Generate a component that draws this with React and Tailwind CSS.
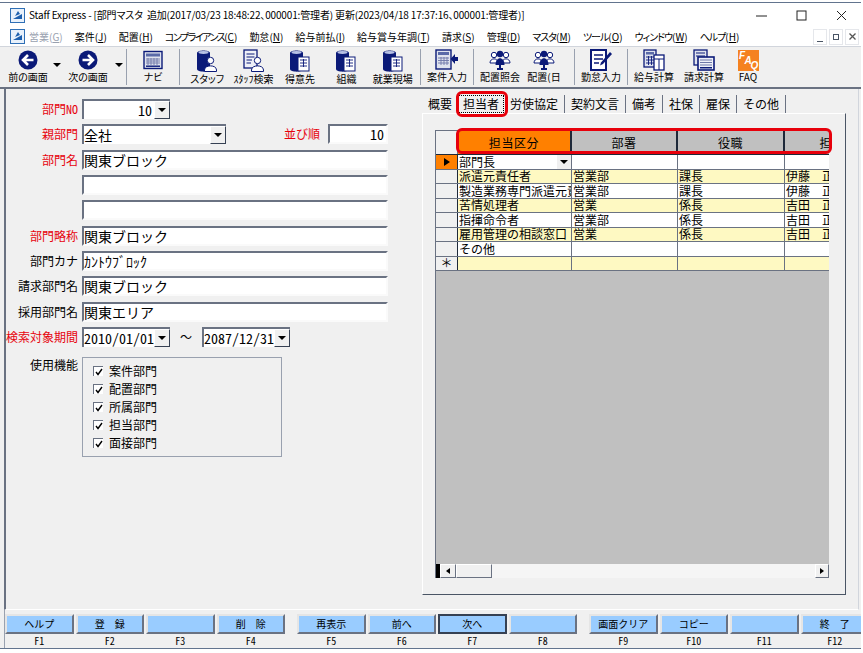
import React from 'react';

const font = { fontFamily: '"Noto Sans CJK JP", "Liberation Sans", sans-serif' };
const sunken = 'border-2 border-t-gray-500 border-l-gray-500 border-r-neutral-50 border-b-neutral-50 bg-white';
const raised = 'border border-t-white border-l-white border-r-gray-500 border-b-gray-500 bg-[#f0f0f0]';
const palt = '[font-feature-settings:"palt"]';
const hwid = '[font-feature-settings:"hwid"]';
const navy = '#0b1a78';

const menus = [
  ['営業', 'G'], ['案件', 'J'], ['配置', 'H'], ['コンプライアンス', 'C', 'tracking-[-1.5px]'], ['勤怠', 'N'], ['給与前払', 'I'], ['給与賞与年調', 'T'],
  ['請求', 'S'], ['管理', 'D'], ['マスタ', 'M', 'tracking-[-1px]'], ['ツール', 'O', 'tracking-[-1px]'], ['ウィンドウ', 'W', 'tracking-[-1px]'], ['ヘルプ', 'H', 'tracking-[-1px]'],
];

const gridRows = [
  { name: '部門長', dept: '', role: '', staff: '', bg: 'bg-white', current: true },
  { name: '派遣元責任者', dept: '営業部', role: '課長', staff: '伊藤　正', bg: 'bg-yellow-100' },
  { name: '製造業務専門派遣元責任者', dept: '営業部', role: '課長', staff: '伊藤　正', bg: 'bg-white' },
  { name: '苦情処理者', dept: '営業', role: '係長', staff: '吉田　正', bg: 'bg-yellow-100' },
  { name: '指揮命令者', dept: '営業部', role: '係長', staff: '吉田　正', bg: 'bg-white' },
  { name: '雇用管理の相談窓口', dept: '営業', role: '係長', staff: '吉田　正', bg: 'bg-yellow-100' },
  { name: 'その他', dept: '', role: '', staff: '', bg: 'bg-white' },
  { name: '', dept: '', role: '', staff: '', bg: 'bg-yellow-100', isNew: true },
];

const cols = 'grid grid-cols-[22px_114px_106px_107px_107px]';

function AppIcon() {
  return (
    <svg width="15" height="15" viewBox="0 0 15 15">
      <rect x="0.5" y="0.5" width="14" height="14" fill="#e8f1fb" stroke="#2f6fb5" />
      <path d="M3 11 L12 6 L12 11 Z" fill="#1c5fae" />
      <path d="M5 8 L8 3 L10 6 Z" fill="#1c5fae" />
    </svg>
  );
}

function ArrowCircle({ right }) {
  return (
    <svg width="20" height="20" viewBox="0 0 20 20">
      <circle cx="10" cy="10" r="9.5" fill={navy} />
      <g transform={right ? 'rotate(180 10 10)' : undefined}>
        <path d="M15.5 10 H6 M10 5 L5 10 L10 15" fill="none" stroke="white" strokeWidth="2.6" />
      </g>
    </svg>
  );
}

function Navi() {
  return (
    <svg width="20" height="20" viewBox="0 0 20 20">
      <rect x="1" y="1.5" width="18" height="17" fill="#dfe3ee" stroke={navy} strokeWidth="1.4" />
      <rect x="3" y="3.5" width="14" height="3" fill="#5a6aa8" />
      <path d="M3 9 H17 M3 11 H17 M3 13 H17 M5 8 V15 M8 8 V15 M11 8 V15 M14 8 V15" stroke="#6d77a8" strokeWidth="0.9" />
      <rect x="3" y="15.5" width="14" height="1.4" fill={navy} />
    </svg>
  );
}

function Cylinder({ children }) {
  return (
    <svg width="22" height="24" viewBox="0 0 22 24">
      <path d="M1 4 C1 0.5 14 0.5 14 4 V20 C14 23.5 1 23.5 1 20 Z" fill={navy} />
      <ellipse cx="7.5" cy="3.5" rx="5" ry="1.4" fill="#b8c2e6" />
      {children}
    </svg>
  );
}

function Person() {
  return (
    <g>
      <circle cx="14.5" cy="11.5" r="3.2" fill="white" stroke={navy} />
      <path d="M8.5 21 C8.5 15.5 20.5 15.5 20.5 21 V22.5 H8.5 Z" fill="white" stroke={navy} />
    </g>
  );
}

function Building() {
  return (
    <g>
      <rect x="9" y="8" width="11" height="14" fill="white" stroke={navy} />
      <path d="M11 11 H18 M11 14 H18 M11 17 H18 M14.5 10 V18" stroke={navy} strokeWidth="0.9" />
    </g>
  );
}

function DocPerson() {
  return (
    <svg width="22" height="24" viewBox="0 0 22 24">
      <rect x="1" y="1" width="13" height="18" fill="#eef0f8" stroke={navy} strokeWidth="1.3" />
      <path d="M3.5 5 H11.5 M3.5 8 H11.5 M3.5 11 H9 M3.5 14 H8" stroke={navy} />
      <Person />
    </svg>
  );
}

function CaseInput() {
  return (
    <svg width="24" height="22" viewBox="0 0 24 22">
      <rect x="1" y="1" width="15" height="19" fill="#dfe3ee" stroke={navy} strokeWidth="1.4" />
      <rect x="3" y="3" width="11" height="3" fill="#5a6aa8" />
      <path d="M3 9 H14 M3 11.5 H14 M3 14 H14 M6 8 V16 M9 8 V16 M12 8 V16" stroke="#6d77a8" strokeWidth="0.9" />
      <path d="M23 8 H20 V5 L15.5 10 L20 15 V12 H23 Z" fill={navy} />
    </svg>
  );
}

function People() {
  const side = 'white';
  return (
    <svg width="22" height="20" viewBox="0 0 22 20">
      <circle cx="5" cy="5" r="2.7" fill={side} stroke={navy} />
      <path d="M1 13 C1 7.5 9 7.5 9 13 Z" fill={side} stroke={navy} />
      <circle cx="17" cy="5" r="2.7" fill={side} stroke={navy} />
      <path d="M13 13 C13 7.5 21 7.5 21 13 Z" fill={side} stroke={navy} />
      <circle cx="11" cy="4" r="3.2" fill={navy} />
      <path d="M6.5 15 C6.5 6 15.5 6 15.5 15 Z" fill={navy} />
      <path d="M11 14 V19 M8 19 H14" stroke={navy} strokeWidth="2" />
    </svg>
  );
}

function DocPencil() {
  return (
    <svg width="22" height="22" viewBox="0 0 22 22">
      <rect x="1" y="1" width="15" height="20" fill="white" stroke={navy} strokeWidth="2" />
      <path d="M4 6 H13 M4 10 H13 M4 14 H9" stroke={navy} strokeWidth="1.6" />
      <path d="M20 3 L22 5 L13 15 L10 16.5 L11 13.5 Z" fill={navy} />
    </svg>
  );
}

function Calc() {
  return (
    <svg width="22" height="22" viewBox="0 0 22 22">
      <rect x="1" y="1" width="12" height="17" fill="#dfe3ee" stroke={navy} strokeWidth="1.3" />
      <rect x="3" y="3" width="8" height="2.5" fill="#5a6aa8" />
      <path d="M3 8 H11 M3 11 H11 M3 14 H11 M5.5 7 V16 M8.5 7 V16" stroke={navy} strokeWidth="0.9" />
      <rect x="11" y="6" width="10" height="15" fill="white" stroke={navy} strokeWidth="1.3" />
      <path d="M11 10 H21 M16 10 V21" stroke={navy} />
    </svg>
  );
}

function BillCalc() {
  return (
    <svg width="22" height="22" viewBox="0 0 22 22">
      <rect x="1" y="1" width="13" height="15" fill="#dfe3ee" stroke={navy} strokeWidth="1.3" />
      <path d="M3 4 H12 M3 7 H12" stroke={navy} />
      <rect x="5" y="8" width="16" height="13" fill="#eef0f8" stroke={navy} strokeWidth="1.6" />
      <path d="M7 11 H19 M7 13.5 H19 M7 16 H19" stroke="#6d77a8" />
      <rect x="7" y="18" width="12" height="1.5" fill={navy} />
    </svg>
  );
}

function Faq() {
  return (
    <svg width="21" height="21" viewBox="0 0 21 21">
      <rect width="21" height="21" fill="#f58220" />
      <g fill="white" fontFamily="Liberation Sans" fontStyle="italic" fontWeight="bold" fontSize="10">
        <text x="1" y="9">F</text>
        <text x="6.5" y="14">A</text>
        <text x="12.5" y="19">Q</text>
      </g>
    </svg>
  );
}

function ToolButton({ icon, label, className = 'w-12' }) {
  return (
    <div className={`flex h-full shrink-0 flex-col items-center justify-between pb-1 pt-0.5 ${className}`}>
      <div className="flex h-6 items-center justify-center">{icon}</div>
      <span className="whitespace-nowrap text-[10px] leading-3 text-black">{label}</span>
    </div>
  );
}

function Sep() {
  return <div className="h-9 w-px shrink-0 self-center bg-gray-400" />;
}

function Triangle() {
  return <div className="h-0 w-0 border-x-4 border-t-4 border-x-transparent border-t-black" />;
}

function DropCaret() {
  return (
    <div className="flex h-full w-3.5 shrink-0 justify-center pt-4">
      <Triangle />
    </div>
  );
}

function DropButton() {
  return (
    <div className={`flex h-full w-4 shrink-0 items-center justify-center ${raised} border-r-gray-700 border-b-gray-700`}>
      <Triangle />
    </div>
  );
}

function Label({ children, red }) {
  return (
    <div className={`w-18 shrink-0 whitespace-nowrap text-right text-xs leading-none ${hwid} ${red ? 'text-red-600' : 'text-black'}`}>
      {children}
    </div>
  );
}

function Input({ children, className = 'flex-1', right }) {
  return (
    <div className={`flex h-full items-center overflow-hidden whitespace-nowrap text-sm leading-none text-black ${hwid} ${right ? 'justify-end pr-0.5' : ''} ${sunken} ${className}`}>
      {children}
    </div>
  );
}

function Combo({ children, className, right }) {
  return (
    <div className={`flex h-full items-center overflow-hidden text-sm leading-none text-black ${hwid} ${sunken} border-r-0 border-b-0 ${className}`}>
      <span className={`flex-1 whitespace-nowrap ${right ? 'pr-0.5 text-right' : ''}`}>{children}</span>
      <DropButton />
    </div>
  );
}

function Row({ label, red, children }) {
  return (
    <div className="flex h-5 items-center gap-1">
      <Label red={red}>{label}</Label>
      {children}
    </div>
  );
}

function Check({ label }) {
  return (
    <div className="flex h-4.5 items-center gap-1.5">
      <div className="flex h-2.5 w-2.5 items-center justify-center border-t border-l border-gray-500 bg-white">
        <svg width="8" height="8" viewBox="0 0 8 8">
          <path d="M1 4 L3 6.5 L7 1" fill="none" stroke="black" strokeWidth="1.4" />
        </svg>
      </div>
      <span className="text-xs leading-none text-black">{label}</span>
    </div>
  );
}

function FormPanel() {
  return (
    <div className="w-96 shrink-0 pr-0.5 pt-2.5">
      <div className="flex h-62 flex-col justify-between">
        <Row label="部門NO" red><Combo className="w-22" right>10</Combo></Row>
        <Row label="親部門" red>
          <Combo className="w-36">全社</Combo>
          <div className="ml-auto flex h-full items-center gap-2">
            <span className="text-xs leading-none text-red-600">並び順</span>
            <Input className="w-15" right>10</Input>
          </div>
        </Row>
        <Row label="部門名" red><Input>関東ブロック</Input></Row>
        <Row label=""><Input /></Row>
        <Row label=""><Input /></Row>
        <Row label="部門略称" red><Input>関東ブロック</Input></Row>
        <Row label="部門カナ"><Input>ｶﾝﾄｳﾌﾞﾛｯｸ</Input></Row>
        <Row label="請求部門名"><Input>関東ブロック</Input></Row>
        <Row label="採用部門名"><Input>関東エリア</Input></Row>
        <Row label="検索対象期間" red>
          <Combo className="w-22">2010/01/01</Combo>
          <span className="w-6 text-center text-xs leading-none text-black">～</span>
          <Combo className="w-22">2087/12/31</Combo>
        </Row>
      </div>
      <div className="mt-2.5 flex gap-1">
        <div className="w-18 pt-0.5 text-right text-xs leading-none text-black">使用機能</div>
        <div className="flex w-50 flex-col border border-gray-400 p-2.5 py-1">
          {['案件部門', '配置部門', '所属部門', '担当部門', '面接部門'].map((l) => <Check key={l} label={l} />)}
        </div>
      </div>
    </div>
  );
}

function Tabs() {
  const rest = ['労使協定', '契約文言', '備考', '社保', '雇保', 'その他'];
  return (
    <div className="relative flex h-4.5 items-center text-xs leading-none text-black">
      <span className="px-1.5">概要</span>
      <span className="border border-dotted border-black px-1 py-0.5">担当者</span>
      {rest.map((t) => (
        <span key={t} className="flex h-full items-center border-r border-gray-500 px-1.5">{t}</span>
      ))}
      <div className="absolute -top-1 left-8.5 h-6.5 w-13 rounded-md border-3 border-red-600" />
    </div>
  );
}

function DataGrid() {
  return (
    <div className="relative flex min-h-0 flex-1 flex-col overflow-hidden border-t border-l border-gray-500 bg-[#c0c0c0]">
      <div className={`${cols} h-6 shrink-0 border-b border-gray-800 text-xs leading-none text-black`}>
        <div className="border-r border-gray-500 bg-[#f0f0f0]" />
        <div className="flex items-center justify-center border-r-2 border-gray-800 bg-[#ff8000] tracking-wider">担当区分</div>
        <div className="flex items-center justify-center border-r-2 border-gray-800 tracking-wider">部署</div>
        <div className="flex items-center justify-center border-r-2 border-gray-800 tracking-wider">役職</div>
        <div className="flex items-center justify-center tracking-wider">担当者</div>
      </div>
      <div className="grid h-29 shrink-0 grid-rows-8">
        {gridRows.map((r, i) => (
          <div key={i} className={`${cols} border-b border-gray-500 text-xs leading-none text-black`}>
            <div className={`flex items-center justify-center border-r border-gray-800 ${r.current ? 'bg-[#ff8000]' : 'bg-[#f0f0f0]'}`}>
              {r.current && <div className="h-0 w-0 border-y-4 border-l-6 border-y-transparent border-l-black" />}
              {r.isNew && <span>＊</span>}
            </div>
            <div className={`flex items-center overflow-hidden whitespace-nowrap border-r border-gray-500 pl-px ${r.bg}`}>
              <span className="flex-1 overflow-hidden">{r.name}</span>
              {r.current && (
                <div className="flex h-full w-3.5 shrink-0 items-center justify-center bg-[#f0f0f0]">
                  <Triangle />
                </div>
              )}
            </div>
            <div className={`flex items-center overflow-hidden whitespace-nowrap border-r border-gray-500 pl-px ${r.bg}`}>{r.dept}</div>
            <div className={`flex items-center overflow-hidden whitespace-nowrap border-r border-gray-500 pl-px ${r.bg}`}>{r.role}</div>
            <div className={`flex items-center overflow-hidden whitespace-nowrap pl-px ${r.bg}`}>{r.staff}</div>
          </div>
        ))}
      </div>
      <div className="min-h-0 flex-1" />
      <div className="flex h-3.5 shrink-0 bg-neutral-100">
        <div className="w-1 bg-black" />
        <div className={`flex w-4 items-center justify-center ${raised}`}>
          <div className="h-0 w-0 border-y-3 border-r-4 border-y-transparent border-r-black" />
        </div>
        <div className={`w-9 ${raised}`} />
        <div className="flex-1" />
        <div className={`flex w-3.5 items-center justify-center ${raised}`}>
          <div className="h-0 w-0 border-y-3 border-l-4 border-y-transparent border-l-black" />
        </div>
      </div>
    </div>
  );
}

const fnGroups = [
  [['ヘルプ', 'F1'], ['登　録', 'F2'], ['', 'F3'], ['削　除', 'F4']],
  [['再表示', 'F5'], ['前へ', 'F6'], ['次へ', 'F7'], ['', 'F8']],
  [['画面クリア', 'F9'], ['コピー', 'F10'], ['', 'F11'], ['終　了', 'F12']],
];

function FnButton({ text, keyName }) {
  const focus = keyName === 'F7';
  return (
    <div className="flex flex-col items-stretch">
      <div className={`flex h-5 items-center justify-center whitespace-nowrap bg-[#99ccff] text-[10px] leading-none text-black ${focus ? 'border-2 border-gray-700' : 'border-2 border-t-neutral-200 border-l-neutral-200 border-r-gray-500 border-b-gray-500'}`}>
        {text}
      </div>
      <div className={`flex h-3.5 items-center justify-center text-[10px] leading-none text-black ${hwid}`}>{keyName}</div>
    </div>
  );
}

export default function App() {
  return (
    <div className="relative h-screen w-full overflow-hidden bg-white pb-1 pr-0.5 pt-0.5" style={font}>
      <div className="flex h-full flex-col overflow-hidden border-t border-b border-slate-500 bg-[#f0f0f0]">
        <div className="flex h-6 shrink-0 items-center bg-white pl-2.5">
          <AppIcon />
          <span className={`ml-1 whitespace-nowrap text-[10px] leading-none tracking-[-0.15px] text-black ${palt}`}>
            Staff Express - [部門マスタ&nbsp;&nbsp;追加(2017/03/23 18:48:22、000001:管理者) 更新(2023/04/18 17:37:16、000001:管理者)]
          </span>
          <div className="ml-auto flex text-black">
            <div className="flex w-10 justify-center"><svg width="11" height="11" viewBox="0 0 11 11"><path d="M0 6 H11" stroke="#222" /></svg></div>
            <div className="flex w-10 justify-center"><svg width="11" height="11" viewBox="0 0 11 11"><rect x="1" y="1" width="9" height="9" fill="none" stroke="#222" /></svg></div>
            <div className="flex w-10 justify-center"><svg width="11" height="11" viewBox="0 0 11 11"><path d="M1 1 L10 10 M10 1 L1 10" stroke="#222" /></svg></div>
          </div>
        </div>

        <div className="flex h-5 shrink-0 items-center border-b border-gray-300 bg-white pl-2.5">
          <AppIcon />
          <div className={`ml-1 flex gap-3 whitespace-nowrap text-[10px] leading-none text-black ${palt}`}>
            {menus.map(([m, k, tight], i) => (
              <span key={m + k} className={i === 0 ? 'text-gray-400' : ''}><span className={tight}>{m}</span>(<span className="underline">{k}</span>)</span>
            ))}
          </div>
          <div className="ml-auto mr-0.5 flex gap-0.5 text-gray-500">
            <div className="flex h-4 w-3.5 items-end justify-center border border-gray-200 pb-0.5"><div className="h-px w-1.5 bg-gray-600" /></div>
            <div className="flex h-4 w-3.5 items-center justify-center border border-gray-200"><div className="h-1.5 w-1.5 border border-gray-600" /></div>
            <div className="flex h-4 w-3.5 items-center justify-center border border-gray-200">
              <svg width="7" height="7" viewBox="0 0 7 7"><path d="M0.5 0.5 L6.5 6.5 M6.5 0.5 L0.5 6.5" stroke="#555" strokeWidth="1.3" /></svg>
            </div>
          </div>
        </div>

        <div className={`flex h-10.5 shrink-0 items-stretch border-b-2 border-gray-500 pl-1.5 ${palt}`}>
          <ToolButton className="w-11" icon={<ArrowCircle />} label="前の画面" />
          <DropCaret />
          <ToolButton icon={<ArrowCircle right />} label="次の画面" />
          <DropCaret />
          <Sep />
          <ToolButton className="w-13" icon={<Navi />} label="ナビ" />
          <Sep />
          <div className="flex w-60 shrink-0 px-1">
            <ToolButton className="flex-1" icon={<Cylinder><Person /></Cylinder>} label="スタッフ" />
            <ToolButton className="flex-1" icon={<DocPerson />} label="ｽﾀｯﾌ検索" />
            <ToolButton className="flex-1" icon={<Cylinder><Building /></Cylinder>} label="得意先" />
            <ToolButton className="flex-1" icon={<Cylinder><Building /></Cylinder>} label="組織" />
            <ToolButton className="flex-1" icon={<Cylinder><Building /></Cylinder>} label="就業現場" />
          </div>
          <Sep />
          <ToolButton className="w-13" icon={<CaseInput />} label="案件入力" />
          <Sep />
          <div className="flex w-25 shrink-0 pl-1">
            <ToolButton className="w-11" icon={<People />} label="配置照会" />
            <ToolButton className="w-11" icon={<People />} label="配置(日" />
          </div>
          <Sep />
          <ToolButton className="w-13" icon={<DocPencil />} label="勤怠入力" />
          <Sep />
          <ToolButton className="w-13" icon={<Calc />} label="給与計算" />
          <ToolButton icon={<BillCalc />} label="請求計算" />
          <ToolButton className="w-10" icon={<Faq />} label="FAQ" />
        </div>

        <div className="ml-1 mr-0.5 flex min-h-0 flex-1 border-b border-l-2 border-r border-b-white border-l-gray-500 border-r-gray-300">
          <FormPanel />
          <div className="ml-8 flex w-106 shrink-0 flex-col pb-3.5 pt-1.5">
            <Tabs />
            <div className="flex min-h-0 flex-1 flex-col border border-t-white border-l-white border-r-gray-600 border-b-gray-600 pb-4 pl-3 pr-4 pt-4">
              <DataGrid />
            </div>
          </div>
        </div>

        <div className="ml-1 flex h-9.5 shrink-0 gap-3 overflow-hidden border-l border-l-gray-400 pt-1">
          {fnGroups.map((g, i) => (
            <div key={i} className="grid w-70 shrink-0 grid-cols-4 gap-0.5">
              {g.map(([t, k]) => <FnButton key={k} text={t} keyName={k} />)}
            </div>
          ))}
        </div>
      </div>
      <div className="pointer-events-none absolute left-114 top-32 h-6.5 w-94 rounded-md border-3 border-red-600" />
    </div>
  );
}
